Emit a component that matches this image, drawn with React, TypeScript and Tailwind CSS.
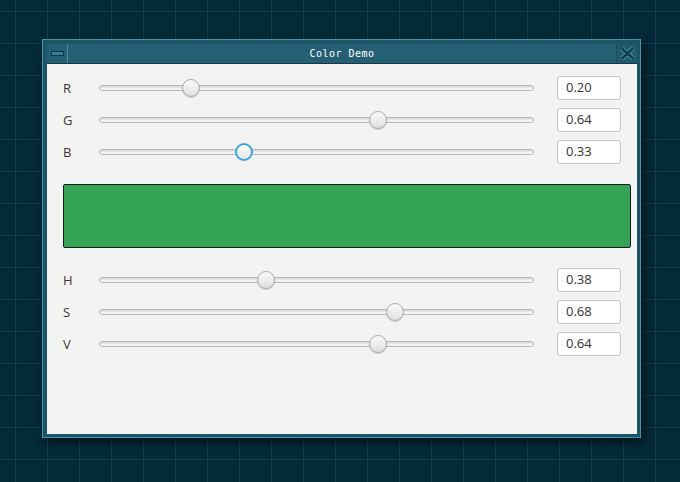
import { useState } from "react"

type SliderRowProps = {
  label: string
  value: number
  pos: number
  focused?: boolean
}

function SliderRow({ label, value, pos, focused }: SliderRowProps) {
  // thumb travels over the track minus its own width
  const left = 8 + pos * 419
  return (
    <div className="flex items-center h-[24px]">
      <span className="w-[36px] text-[13px] text-[#3d362f] leading-none">{label}</span>
      <div className="relative w-[435px] h-[24px] flex items-center">
        <div className="w-full h-[6px] rounded-full border border-[#b9b9b9] bg-[linear-gradient(to_bottom,#d6d6d6,#f1f1f1_60%,#fafafa)]" />
        <div
          className="absolute top-[3px] w-[18px] h-[18px] -ml-[9px] rounded-full"
          style={{ left }}
        >
          {focused ? (
            <div className="w-full h-full rounded-full border-2 border-[#3aa7dc] bg-[linear-gradient(to_bottom,#fdfdfd,#e4e4e4)]" />
          ) : (
            <div className="w-full h-full rounded-full border border-[#a9a9a9] bg-[linear-gradient(to_bottom,#fcfcfc,#dedede)] shadow-[0_1px_1px_rgba(0,0,0,0.15)]" />
          )}
        </div>
      </div>
      <div className="ml-[23px] w-[64px] h-[24px] rounded-[3px] border border-[#c6c6c6] bg-white flex items-center pl-[8px] text-[13px] text-[#333]">
        {value.toFixed(2)}
      </div>
    </div>
  )
}

export default function App() {
  const [rgb] = useState({ r: 0.2, g: 0.646, b: 0.327 })
  const [hsv] = useState({ h: 0.379, s: 0.687, v: 0.646 })

  return (
    <div
      className="w-[680px] h-[482px] overflow-hidden pl-[42px] pt-[39px] bg-[#032a38] bg-[linear-gradient(to_right,#193b49_1px,transparent_1px),linear-gradient(to_bottom,#193b49_1px,transparent_1px)] bg-[size:32px_32px] bg-[position:15px_11px]"
      style={{ fontFamily: '"Open Sans", "Noto Sans", sans-serif' }}
    >
      <div className="relative w-[599px] h-[399px] flex flex-col bg-[#1d5466] border border-[#3b97b0] shadow-[3px_4px_10px_rgba(0,0,0,0.6)] pl-[4px] pr-[3px] pb-[3px] pt-[4px]">
        {/* title bar */}
        <div className="flex h-[20px] bg-[#245f73] border-b border-[#12394a]">
          <div className="w-[21px] flex items-center justify-center border-r border-[#3d8fa6]">
            <div className="w-[13px] h-[5px] bg-[#2f8099] border border-[#0f3342]" />
          </div>
          <div className="flex-1 flex items-center justify-center text-[10px] text-white tracking-[0.5px]" style={{ fontFamily: '"DejaVu Sans Mono", monospace' }}>
            Color Demo
          </div>
          <div className="w-[21px] flex items-center justify-center border-l border-[#1a4d5f] bg-[#23596c]">
            <svg width="15" height="13" viewBox="0 0 15 13">
              <path d="M2 1.5 L13 11.5 M13 1.5 L2 11.5" stroke="#3c94ad" strokeWidth="4.5" />
              <path d="M2 1.5 L13 11.5 M13 1.5 L2 11.5" stroke="#133a4b" strokeWidth="2.5" />
            </svg>
          </div>
        </div>

        {/* content */}
        <div className="flex-1 bg-[#f3f3f3] pl-[16px] pt-[12px] flex flex-col">
          <div className="flex flex-col gap-[8px]">
            <SliderRow label="R" value={0.2} pos={rgb.r} />
            <SliderRow label="G" value={0.64} pos={rgb.g} />
            <SliderRow label="B" value={0.33} pos={rgb.b} focused />
          </div>
          <div className="mt-[20px] w-[568px] h-[64px] border border-[#1c1c1c] rounded-[2px] bg-[#33a354]" />
          <div className="mt-[20px] flex flex-col gap-[8px]">
            <SliderRow label="H" value={0.38} pos={hsv.h} />
            <SliderRow label="S" value={0.68} pos={hsv.s} />
            <SliderRow label="V" value={0.64} pos={hsv.v} />
          </div>
        </div>
      </div>
    </div>
  )
}
